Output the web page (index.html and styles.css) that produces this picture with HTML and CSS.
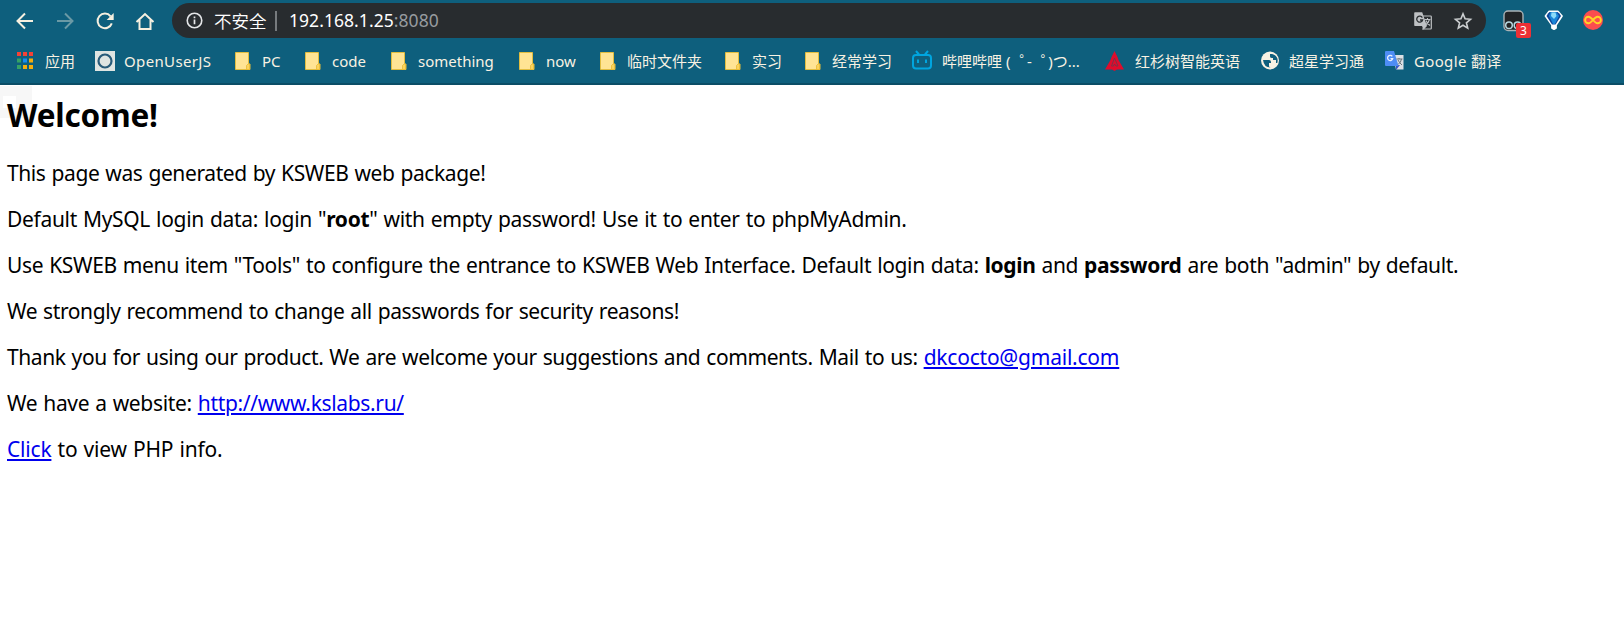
FILE: index.html
```
<!DOCTYPE html>
<html lang="zh-CN">
<head>
<meta charset="utf-8">
<title>192.168.1.25:8080</title>
<link rel="stylesheet" href="styles.css">
</head>
<body>
<svg width="0" height="0" class="defs">
  <symbol id="folder" viewBox="0 0 18 20"><path d="M1.500 1.500h13v11.500h1.500v5.500h-14.500z" fill="#ffe494" stroke="#e2bd3f"/><path d="M12.500 18.500v-4l1.500-1.500h1.500v5.500z" fill="#fbd45c" stroke="#e8b934" stroke-width=".8"/></symbol>
</svg>
<header class="browser">
  <div class="toolbar">
    <nav class="nav">
      <svg class="ic" viewBox="0 0 20 20"><path d="M18 10H3M10 2.500L2.500 10l7.500 7.500" class="ln"/></svg>
      <svg class="ic dim" viewBox="0 0 20 20"><path d="M2 10h15M10 2.500l7.500 7.500-7.500 7.500" class="ln"/></svg>
      <svg class="ic" viewBox="0 0 20 20"><path d="M16.800 12.300A7.300 7.300 0 1 1 15.600 5.300" class="ln"/><path d="M18.700 2v7h-7z" fill="#f6f0e0"/></svg>
      <svg class="ic" viewBox="0 0 20 20"><path d="M1.500 11L10 3l8.500 8M4.500 9v9h11V9" class="ln"/></svg>
    </nav>
    <div class="address">
      <svg class="info" viewBox="0 0 18 18"><circle cx="9" cy="9" r="7.700" fill="none" stroke="#e4e6e8" stroke-width="1.700"/><path d="M9 8v5M9 4.700v2" stroke="#e4e6e8" stroke-width="1.800"/></svg>
      <span class="unsafe">不安全</span><span class="sep"></span>
      <span class="url">192.168.1.25<span class="port">:8080</span></span>
      <svg class="trans" viewBox="0 0 18 18"><path d="M8 4h8.500q.8 0 .8.800v11.400q0 .8-.8.800H8" fill="none" stroke="#bec1c4" stroke-width="1.200"/><path d="M1 .3h7.200L13 14H1q-.8 0-.8-.8V1.100Q.2.300 1 .3zM8 14h5l-3.500 3.800z" fill="#bec1c4"/><path d="M8.300 5.600A3 3 0 1 0 8.600 8H6" fill="none" stroke="#282c2f" stroke-width="1.300"/><path d="M10.500 7.500h6M13.500 6v1.500M15.500 7.500q-1 3.500-4 5.500M12 8.500q1.500 3.500 4 5" fill="none" stroke="#bec1c4" stroke-width="1.100"/></svg>
      <svg class="star" viewBox="0 0 18 18"><path d="M9 1.900l2.100 4.900 5.400.5-4.100 3.500 1.300 5.300L9 13.300l-4.700 2.800 1.300-5.300-4.100-3.500 5.400-.5z" fill="none" stroke="#cbced0" stroke-width="1.600"/></svg>
    </div>
    <div class="exts">
      <div class="tamper"><svg viewBox="0 0 22 22" width="22" height="22"><rect x="1" y="1" width="19" height="19.500" rx="4" fill="#222426" stroke="#aab3b6" stroke-width="1.400"/><circle cx="6" cy="15.200" r="3.300" fill="#222" stroke="#b6d7df" stroke-width="1.500"/><circle cx="14.500" cy="15.200" r="3.300" fill="#222" stroke="#b6d7df" stroke-width="1.500"/></svg><span class="badge">3</span></div>
      <svg class="gem" viewBox="0 0 20 20"><path d="M5 1.500h9l4 4.500-6 9v3L10 19.200 8 18v-3L1.500 6z" fill="#fff" stroke="#fff" stroke-width="1.800" stroke-linejoin="round"/><path d="M5.500 2h8q2 1 3.500 4l-5.500 8.500h-3.500L2.500 6Q4 3 5.500 2z" fill="#0d4799"/><path d="M6.500 2h6l2.500 4-4 8H9L5 6z" fill="#1c86d8"/><path d="M7.500 2.500h4L12.500 6 10 9 7 6z" fill="#8ddcfa"/></svg>
      <svg class="inf" viewBox="0 0 20 20"><circle cx="10" cy="10" r="10" fill="#fb4d4f"/><path d="M10 10C8 7.600 7 6.700 5.400 6.700a3.300 3.300 0 0 0 0 6.600C7 13.300 8 12.400 10 10s3-3.300 4.600-3.300a3.300 3.300 0 0 1 0 6.600C13 13.300 12 12.400 10 10z" fill="none" stroke="#ffd426" stroke-width="1.900"/></svg>
    </div>
  </div>
  <div class="bookmarks">
    <div class="bm"><svg viewBox="0 0 20 20"><path d="M0 1h4v4H0zM6 1h4v4H6zM12 1h4v4h-4z" fill="#f54236"/><path d="M0 7.500h4v4H0zM0 14h4v4H0z" fill="#35a265"/><path d="M6 7.500h4v4H6z" fill="#168cf0"/><path d="M12 7.500h4v4h-4zM6 14h4v4H6zM12 14h4v4h-4z" fill="#f5ad0c"/></svg><span>应用</span></div>
    <div class="bm b2"><svg viewBox="0 0 20 20"><path d="M0 0h20v20H0z" fill="#dfe5e2"/><circle cx="10" cy="10" r="6.500" fill="#dfe5e2" stroke="#285b79" stroke-width="2.200"/></svg><span class="wide">OpenUserJS</span></div>
    <div class="bm"><svg viewBox="0 0 20 20"><use href="#folder" width="18" height="20"/></svg><span>PC</span></div>
    <div class="bm"><svg viewBox="0 0 20 20"><use href="#folder" width="18" height="20"/></svg><span>code</span></div>
    <div class="bm"><svg viewBox="0 0 20 20"><use href="#folder" width="18" height="20"/></svg><span>something</span></div>
    <div class="bm"><svg viewBox="0 0 20 20"><use href="#folder" width="18" height="20"/></svg><span>now</span></div>
    <div class="bm"><svg viewBox="0 0 20 20"><use href="#folder" width="18" height="20"/></svg><span>临时文件夹</span></div>
    <div class="bm"><svg viewBox="0 0 20 20"><use href="#folder" width="18" height="20"/></svg><span>实习</span></div>
    <div class="bm"><svg viewBox="0 0 20 20"><use href="#folder" width="18" height="20"/></svg><span>经常学习</span></div>
    <div class="bm b10"><svg viewBox="0 0 20 20"><rect x="1" y="4" width="18" height="13.500" rx="3" fill="none" stroke="#00a5df" stroke-width="2"/><path d="M4 0l3 3.500M16 0l-3 3.500M6 8.500v3.500M14 8.500v3.500" stroke="#00a5df" stroke-width="2"/></svg><span class="bili">哔哩哔哩 (<i>゜</i>-<i>゜</i>)つ...</span></div>
    <div class="bm b11"><svg viewBox="0 0 20 20"><path d="M9.500 0l3 6 1 3 5.500 9.500h-7l-2.500 1.500L7 18.500H0L5.500 9l1-3z" fill="#df0c2c"/><path d="M9.500 7L6.500 15h2l1-2 1.500 2h2z" fill="none" stroke="#71364c" stroke-width=".9"/></svg><span>红杉树智能英语</span></div>
    <div class="bm b12"><svg viewBox="0 0 20 20"><circle cx="9" cy="9.500" r="9" fill="#f8f2e3"/><path d="M2 9h6q2 0 2 2v1H8v3.500l1.500 1Q3 16.500 2 9zM9 3v2.500q0 1.500 2 1.500h1v2h3v3h1.300Q18 6 12.500 3.500L11 3z" fill="#0e5f7d"/></svg><span>超星学习通</span></div>
    <div class="bm b13"><svg viewBox="0 0 20 20"><path d="M8 4h10.500v14.500H11z" fill="#dde1e5"/><path d="M11 14h4l-4 5z" fill="#3b55c4"/><path d="M1 0h8l4.500 15H1q-1 0-1-1V1q0-1 1-1z" fill="#4e8df5"/><path d="M7.300 5.400A2.600 2.600 0 1 0 7.700 7.600H5.500" fill="none" stroke="#e9f1ff" stroke-width="1.300"/><path d="M11.500 8h6M14 7v1M16.500 8q-.5 3.500-3.500 5.500M13 9q1.500 3 4 5" fill="none" stroke="#69737b" stroke-width="1"/></svg><span class="wide">Google 翻译</span></div>
  </div>
</header>
<main class="page">
  <div class="ghost"></div>
  <h1>Welcome!</h1>
  <p class="p1">This page was generated by KSWEB web package!</p>
  <p class="p2">Default MySQL login data: login "<b>root</b>" with empty password! Use it to enter to phpMyAdmin.</p>
  <p class="p3">Use KSWEB menu item "Tools" to configure the entrance to KSWEB Web Interface. Default login data: <b>login</b> and <b>password</b> are both "admin" by default.</p>
  <p class="p4">We strongly recommend to change all passwords for security reasons!</p>
  <p class="p5">Thank you for using our product. We are welcome your suggestions and comments. Mail to us: <a href="#">dkcocto@gmail.com</a></p>
  <p class="p6">We have a website: <a href="#">http://www.kslabs.ru/</a></p>
  <p class="p7"><a href="#">Click</a> to view PHP info.</p>
</main>
</body>
</html>
```
FILE: styles.css
```
* { box-sizing: border-box; }
body { margin: 0; height: 632px; overflow: hidden; background: #fff; color: #000; font-family: "Noto Sans", "Noto Sans CJK SC", sans-serif; }
svg { display: block; flex: none; overflow: visible; }
.defs { position: absolute; }
.browser { height: 85px; background: #0e5f7d; border-bottom: 2px solid #0b4d66; }
.toolbar { display: flex; height: 41px; padding-top: 3px; }
.nav { display: flex; gap: 20px; width: 172px; padding: 8px 0 0 15px; }
.ic { width: 20px; height: 20px; }
.dim { opacity: .4; }
.ln { fill: none; stroke: #f6f0e0; stroke-width: 2; }
.address { display: flex; align-items: center; width: 1314px; height: 35px; padding: 0 14px; border-radius: 18px; background: #282c2f; color: #e4e6e8; font-size: 17.500px; white-space: nowrap; }
.info { width: 17px; height: 17px; }
.unsafe { width: 53px; margin-left: 11px; padding-bottom: 1px; color: #fff; font-family: "Noto Sans CJK SC", sans-serif; font-weight: 350; }
.sep { width: 2px; height: 20px; margin-left: 8px; background: #777b7e; }
.url { margin-left: 12px; padding-bottom: 1px; color: #fff; flex: 1; letter-spacing: .05px; }
.port { color: #969b9f; }
.trans { width: 18px; height: 18px; margin-right: 22px; }
.star { width: 18px; height: 18px; }
.exts { display: flex; padding: 7px 0 0 17px; }
.tamper { position: relative; width: 41px; }
.badge { position: absolute; left: 13px; top: 13px; width: 15px; height: 15px; border-radius: 2px; background: #ee3035; color: #fff; font-size: 12px; line-height: 15px; text-align: center; }
.gem { width: 20px; height: 20px; margin-right: 19px; }
.inf { width: 20px; height: 20px; }
.bookmarks { display: grid; grid-template-columns: 78px 139px 70px 86px 128px 81px 125px 80px 108px 193px 156px 124px 150px; padding-left: 17px; height: 42px; color: #f8f2e3; font-size: 15px; white-space: nowrap; }
.bm { display: flex; align-items: center; gap: 8px; height: 40px; }
.bm span { padding-bottom: 1px; }
.bm svg { width: 20px; height: 20px; }
.b2, .b13 { gap: 9px; }
.b10, .b11 { gap: 10px; }
.wide { letter-spacing: .35px; }
.bili i { display: inline-block; width: 16.500px; padding-left: 9px; font-style: normal; }
.page { position: relative; height: 547px; padding: 8px 0 0 7px; }
.ghost { position: absolute; left: 0; top: 1px; width: 32px; height: 32px; background: #fff; border: 10px solid #f7f7f7; border-left-width: 3px; border-right-width: 16px; }
h1 { position: relative; margin: 0 0 22px; font-size: 31.500px; line-height: 43px; letter-spacing: -.2px; }
p { margin: 0 0 16px; font-size: 21px; line-height: 30px; word-spacing: .9px; white-space: nowrap; }
h1, p { width: max-content; }
.p1 { letter-spacing: -.4px; }
.p2 { letter-spacing: -.32px; }
.p3 { letter-spacing: -.36px; }
.p4 { letter-spacing: -.4px; }
.p5 { letter-spacing: -.4px; }
.p5 a { letter-spacing: -.22px; }
.p6 { letter-spacing: -.34px; }
.p6 a { letter-spacing: -.34px; }
.p7 { letter-spacing: -.2px; }
a { color: #00e; text-decoration: underline; text-decoration-thickness: 2px; text-underline-offset: 2px; }
```
